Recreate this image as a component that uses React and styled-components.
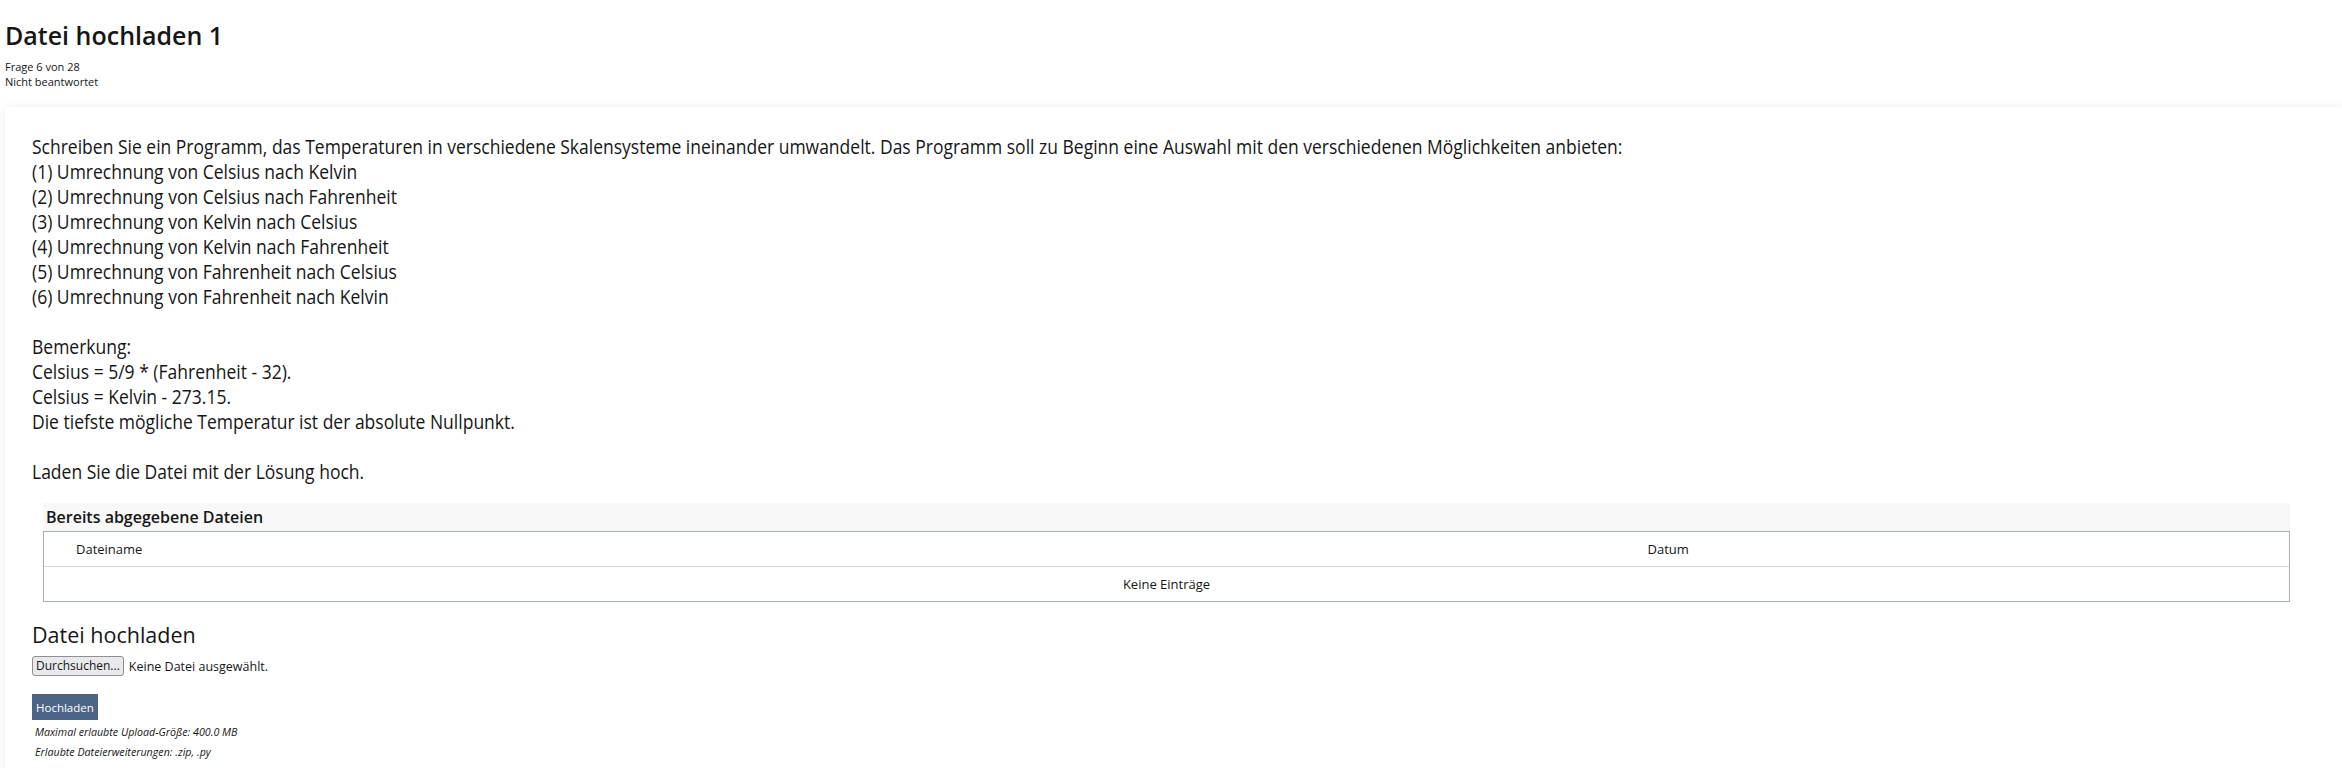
import styled, { createGlobalStyle } from "styled-components";

const Global = createGlobalStyle`
  body {
    margin: 0;
    background: #fff;
    color: #161616;
    font-family: "Open Sans", "Liberation Sans", sans-serif;
  }
`;

const Header = styled.header`
  padding: 21px 5px 0;
`;

const Title = styled.h1`
  margin: 0;
  font-size: 25px;
  line-height: 28px;
  font-weight: 600;
`;

const Meta = styled.div`
  margin-top: 10px;
  font-size: 11px;
  line-height: 15px;
`;

const Panel = styled.section`
  margin: 18px 0 0 5px;
  padding: 27px 27px 40px;
  background: #fff;
  box-shadow: 0 0 10px rgba(0, 0, 0, 0.07);
`;

/* question text is set semi-condensed */
const Question = styled.div`
  font-size: 20px;
  line-height: 25px;
  transform: scaleX(0.875);
  transform-origin: left top;
`;

const Line = styled.div`
  min-height: 25px;
  white-space: nowrap;
`;

const Files = styled.div`
  margin: 19px 25px 0 11px;
`;

const FilesTitle = styled.div`
  height: 28px;
  padding-left: 3px;
  background: #f8f8f8;
  font-size: 16px;
  line-height: 28px;
  font-weight: 600;
`;

const Table = styled.div`
  border: 1px solid #a3afbc;
  font-size: 13px;
`;

const Row = styled.div`
  display: grid;
  grid-template-columns: 70% 1fr;
  height: 34px;
  align-items: center;
  border-top: ${(p) => (p.first ? "none" : "1px solid #d8d8d8")};
`;

const Cell = styled.div`
  grid-column: ${(p) => (p.span ? "1 / -1" : "auto")};
  text-align: ${(p) => (p.span ? "center" : "left")};
  padding-left: ${(p) => (p.span ? "0" : "32px")};
`;

const Upload = styled.div`
  margin-top: 20px;
`;

const UploadTitle = styled.h2`
  margin: 0;
  font-size: 21.5px;
  line-height: 25px;
  font-weight: 400;
`;

const PickRow = styled.div`
  display: flex;
  align-items: center;
  gap: 5px;
  margin-top: 9px;
  font-size: 12.5px;
`;

const Browse = styled.button`
  height: 20px;
  padding: 0 3px;
  border: 1px solid #8f8f8f;
  border-radius: 3px;
  background: #e9e9ed;
  color: #161616;
  font-family: inherit;
  font-size: 12px;
  line-height: 18px;
`;

const Submit = styled.button`
  display: block;
  margin-top: 18px;
  height: 26px;
  padding: 0 4px;
  border: none;
  background: #4c6586;
  color: #fff;
  font-family: inherit;
  font-size: 11.5px;
`;

const Note = styled.p`
  margin: 0;
  padding-left: 3px;
  font-size: 10.7px;
  line-height: 20px;
  font-style: italic;
  &:first-of-type {
    margin-top: 2px;
  }
`;

const lines = [
  "Schreiben Sie ein Programm, das Temperaturen in verschiedene Skalensysteme ineinander umwandelt. Das Programm soll zu Beginn eine Auswahl mit den verschiedenen Möglichkeiten anbieten:",
  "(1) Umrechnung von Celsius nach Kelvin",
  "(2) Umrechnung von Celsius nach Fahrenheit",
  "(3) Umrechnung von Kelvin nach Celsius",
  "(4) Umrechnung von Kelvin nach Fahrenheit",
  "(5) Umrechnung von Fahrenheit nach Celsius",
  "(6) Umrechnung von Fahrenheit nach Kelvin",
  "",
  "Bemerkung:",
  "Celsius = 5/9 * (Fahrenheit - 32).",
  "Celsius = Kelvin - 273.15.",
  "Die tiefste mögliche Temperatur ist der absolute Nullpunkt.",
  "",
  "Laden Sie die Datei mit der Lösung hoch.",
];

export default function App() {
  return (
    <>
      <Global />
      <Header>
        <Title>Datei hochladen 1</Title>
        <Meta>
          <div>Frage 6 von 28</div>
          <div>Nicht beantwortet</div>
        </Meta>
      </Header>

      <Panel>
        <Question>
          {lines.map((l, i) => (
            <Line key={i}>{l}</Line>
          ))}
        </Question>

        <Files>
          <FilesTitle>Bereits abgegebene Dateien</FilesTitle>
          <Table>
            <Row first>
              <Cell>Dateiname</Cell>
              <Cell>Datum</Cell>
            </Row>
            <Row>
              <Cell span>Keine Einträge</Cell>
            </Row>
          </Table>
        </Files>

        <Upload>
          <UploadTitle>Datei hochladen</UploadTitle>
          <PickRow>
            <Browse>Durchsuchen...</Browse>
            <span>Keine Datei ausgewählt.</span>
          </PickRow>
          <Submit>Hochladen</Submit>
          <Note>Maximal erlaubte Upload-Größe: 400.0 MB</Note>
          <Note>Erlaubte Dateierweiterungen: .zip, .py</Note>
        </Upload>
      </Panel>
    </>
  );
}
